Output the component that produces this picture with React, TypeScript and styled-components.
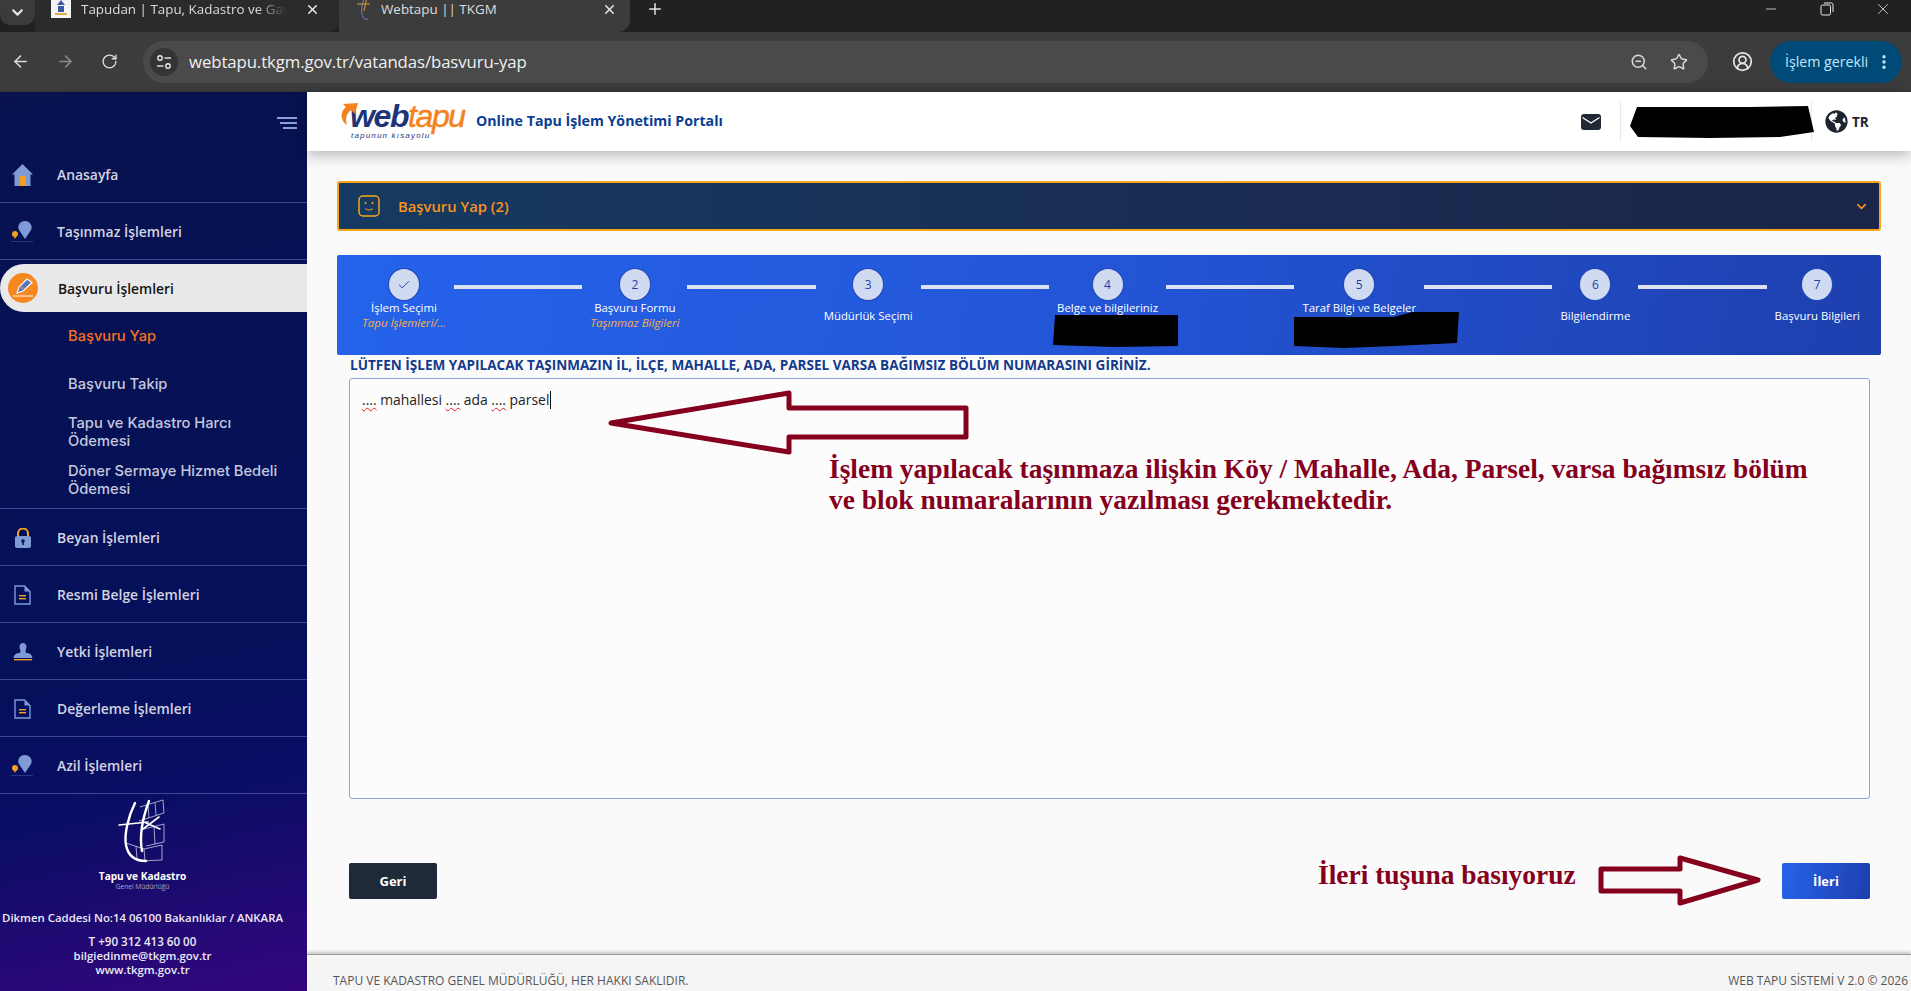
import React from 'react'
import styled, { createGlobalStyle } from 'styled-components'
import {
  ArrowLeft,
  ArrowRight,
  RotateCw,
  X,
  Plus,
  ChevronDown,
  Star,
  ZoomOut,
  CircleUserRound,
  EllipsisVertical,
  Minus,
  Check,
} from 'lucide-react'
import { FaGlobeAmericas } from 'react-icons/fa'

const GlobalStyle = createGlobalStyle`
  html, body {
    margin: 0;
    padding: 0;
    background: #fafafa;
    overflow: hidden;
  }
  * {
    box-sizing: border-box;
  }
`

const Shell = styled.div`
  position: relative;
  width: 1911px;
  height: 991px;
  display: flex;
  flex-direction: column;
  overflow: hidden;
  font-family: 'Open Sans', 'Noto Sans', sans-serif;
`

/* browser chrome */
const TabStrip = styled.div`
  height: 32px;
  flex: none;
  display: flex;
  background: #202222;
  color: #e3e3e3;
`

const TabMenu = styled.div`
  width: 35px;
  height: 25px;
  background: #3a3c3c;
  border-radius: 0 0 10px 10px;
  display: flex;
  align-items: center;
  justify-content: center;
`

const Tab = styled.div<{ $active?: boolean; $width: number }>`
  width: ${({ $width }) => $width}px;
  height: 32px;
  padding: 0 ${({ $active }) => ($active ? 13 : 19)}px 14px 16px;
  display: flex;
  align-items: center;
  gap: 10px;
  font-size: 13.4px;
  background: ${({ $active }) => ($active ? '#3c3c3c' : '#2a2b2b')};
  border-radius: 0 0 12px 0;
`

const TabTitle = styled.span<{ $fade?: boolean }>`
  flex: 1;
  white-space: nowrap;
  overflow: hidden;
  color: #dcdcdc;
  ${({ $fade }) =>
    $fade &&
    `
    margin-right: 8px;
    mask-image: linear-gradient(90deg, #000 85%, transparent 100%);
  `}
`

const NewTab = styled.div`
  width: 50px;
  padding: 0 0 14px 16px;
  display: flex;
  align-items: center;
`

const WindowButtons = styled.div`
  margin-left: auto;
  width: 148px;
  padding-bottom: 14px;
  display: flex;
  align-items: center;
  justify-content: space-between;
  padding-right: 19px;
`

const Toolbar = styled.div`
  height: 60px;
  flex: none;
  display: flex;
  align-items: center;
  padding: 0 9px 0 12px;
  background: #3c3c3c;
  color: #d6d6d6;
  border-bottom: 1px solid #333;
`

const NavButton = styled.div<{ $dim?: boolean }>`
  width: 46px;
  margin-left: -1px;
  display: flex;
  color: ${({ $dim }) => ($dim ? '#8c8c8c' : '#dcdcdc')};
`

const Omnibox = styled.div`
  width: 1565px;
  height: 42px;
  margin-left: -4px;
  padding: 0 20px 0 7px;
  display: flex;
  align-items: center;
  background: #4a4a4a;
  border-radius: 21px;
`

const SiteChip = styled.div`
  width: 28px;
  height: 28px;
  border-radius: 14px;
  background: #333435;
  display: flex;
  align-items: center;
  justify-content: center;
`

const Url = styled.span`
  margin-left: 11px;
  flex: 1;
  font-size: 16.8px;
  letter-spacing: -0.1px;
  color: #f0f0f0;
`

const OmniIcons = styled.div`
  width: 58px;
  display: flex;
  justify-content: space-between;
  color: #d8d8d8;
`

const Profile = styled.div`
  width: 62px;
  padding-left: 6px;
  display: flex;
  justify-content: center;
  color: #e6e6e6;
`

const ActionPill = styled.div`
  width: 132px;
  height: 42px;
  padding: 0 9px 0 15px;
  display: flex;
  align-items: center;
  justify-content: space-between;
  border-radius: 21px;
  background: #004a77;
  color: #c2e7ff;
  font-size: 14.2px;
  white-space: nowrap;
`

/* page frame */
const Body = styled.div`
  flex: 1;
  min-height: 0;
  display: flex;
`

const Sidebar = styled.aside`
  width: 307px;
  flex: none;
  display: flex;
  flex-direction: column;
  background: linear-gradient(168deg, #07124f 0%, #04105a 62%, #0c0d66 78%, #34067f 100%);
`

const SidebarTop = styled.div`
  height: 54px;
  padding: 25px 10px 0 0;
  display: flex;
  justify-content: flex-end;
  color: #8aa0d8;
`

const Row = styled.div`
  height: 57px;
  padding: 1px 0 0 10px;
  display: flex;
  align-items: center;
  border-bottom: 1px solid #3d4690;
  font-size: 13.9px;
  font-weight: 600;
  color: #d3d3e2;
`

const RowIcon = styled.span`
  width: 25px;
  height: 24px;
  margin-right: 22px;
  display: flex;
  align-items: center;
  justify-content: center;
`

const ActiveWrap = styled.div`
  padding: 4px 0 0;
`

const ActiveRow = styled.div`
  height: 48px;
  padding-left: 8px;
  display: flex;
  align-items: center;
  background: #e9e9e9;
  border-radius: 24px 0 0 24px;
  color: #141414;
  font-size: 13.8px;
  font-weight: 600;
`

const ActiveIcon = styled.span`
  width: 30px;
  height: 30px;
  margin-right: 20px;
  border-radius: 50%;
  background: #f7871f;
  display: flex;
  align-items: center;
  justify-content: center;
`

const SubMenu = styled.div`
  padding-bottom: 4px;
  border-bottom: 1px solid #3d4690;
`

const SubItem = styled.div<{ $active?: boolean }>`
  height: 48px;
  padding-left: 68px;
  padding-right: 10px;
  display: flex;
  align-items: center;
  font-family: Inter, 'Noto Sans', sans-serif;
  font-size: 14.7px;
  font-weight: 500;
  line-height: 18px;
  color: ${({ $active }) => ($active ? '#f4701f' : '#c6c8dc')};
`

const SidebarFoot = styled.div`
  padding: 5px 22px 0 0;
  display: flex;
  flex-direction: column;
  align-items: center;
  color: #eceaf6;
  font-weight: 600;
  line-height: 15px;
  white-space: nowrap;
`

const BrandName = styled.div`
  margin-top: 7px;
  font-size: 10.1px;
  font-weight: 700;
  line-height: 13px;
  color: #fff;
`

const BrandSub = styled.div`
  font-size: 6.6px;
  font-weight: 400;
  line-height: 8px;
  color: #a8a8c4;
`

const Address = styled.div`
  margin: 19px 0 10px;
  font-size: 11.4px;
`

const Contact = styled.div<{ $big?: boolean }>`
  font-size: ${({ $big }) => ($big ? 11.6 : 11.4)}px;
  line-height: 14px;
`

const Main = styled.main`
  flex: 1;
  min-width: 0;
  display: flex;
  flex-direction: column;
  background: #fafafa;
`

const Header = styled.header`
  position: relative;
  z-index: 2;
  height: 59px;
  flex: none;
  padding-left: 33px;
  display: flex;
  align-items: center;
  background: #fff;
  box-shadow: 0 4px 14px rgba(0, 0, 0, 0.28);
`

const Logo = styled.div`
  position: relative;
  width: 123px;
  height: 38px;
  padding-left: 10px;
  margin-top: -3px;
  flex: none;
`

const Swoosh = styled.svg`
  position: absolute;
  left: 0;
  top: 0;
`

const LogoWord = styled.div`
  font-family: 'Liberation Sans', sans-serif;
  font-style: italic;
  font-weight: 700;
  font-size: 32px;
  line-height: 31px;
  letter-spacing: -1.4px;
  color: #1d3478;
`

const LogoTapu = styled.span`
  color: #f58220;
  font-weight: 400;
  -webkit-text-stroke: 0.5px #f58220;
`

const LogoTag = styled.div`
  padding-left: 1px;
  font-family: 'Liberation Sans', sans-serif;
  font-style: italic;
  font-size: 8px;
  line-height: 8px;
  letter-spacing: 1.18px;
  color: #1d3478;
`

const PortalTitle = styled.div`
  margin: -2px 0 0 13px;
  font-size: 14.2px;
  font-weight: 700;
  color: #0b3d91;
  white-space: nowrap;
`

const HeaderRight = styled.div`
  margin-left: auto;
  height: 40px;
  display: flex;
  align-items: center;
  color: #1c2430;
`

const MailSlot = styled.div`
  width: 39px;
  padding-right: 19px;
  display: flex;
  justify-content: flex-end;
`

const UserBox = styled.div`
  width: 192px;
  height: 40px;
  padding-left: 9px;
  border-left: 1px solid #e8e8e8;
  border-right: 1px solid #e8e8e8;
  display: flex;
  align-items: center;
`

const Redaction = styled.svg`
  display: block;
  flex: none;
`

const Lang = styled.div`
  width: 99px;
  padding-left: 13px;
  display: flex;
  align-items: center;
  gap: 4px;
  font-size: 13.5px;
  font-weight: 700;
`

const Content = styled.div`
  flex: 1;
  min-height: 0;
  padding: 30px 30px 0;
  display: flex;
  flex-direction: column;
`

const Accordion = styled.div`
  height: 50px;
  flex: none;
  padding: 0 10px 0 19px;
  display: flex;
  align-items: center;
  border: 2px solid #f9a51a;
  border-radius: 3px;
  background: linear-gradient(90deg, #163a60 0%, #1a2c52 60%, #1b2549 100%);
  color: #f7931e;
  font-size: 14.8px;
  font-weight: 600;
`

const AccordionTitle = styled.span`
  margin-left: 18px;
  flex: 1;
`

const StepBand = styled.div`
  height: 100px;
  margin-top: 24px;
  flex: none;
  padding: 13px 21px 0 25px;
  display: flex;
  align-items: flex-start;
  border-radius: 2px;
  background: linear-gradient(100deg, #2563eb 0%, #2355d6 50%, #1e3fae 100%);
  color: #fff;
`

const Step = styled.div`
  position: relative;
  display: flex;
  flex-direction: column;
  align-items: center;
`

const StepCircle = styled.div`
  width: 32px;
  height: 33px;
  border-radius: 50%;
  border: 1px solid #1b44b8;
  background: #d0daf0;
  color: #1d3fa8;
  font-size: 12px;
  display: flex;
  align-items: center;
  justify-content: center;
`

const StepText = styled.div`
  height: 30px;
  margin-top: -1px;
  display: flex;
  flex-direction: column;
  align-items: center;
  justify-content: center;
  white-space: nowrap;
  font-size: 11.4px;
  line-height: 15px;
`

const StepSub = styled.div`
  font-size: 11.5px;
  font-style: italic;
  color: #f7b043;
`

const StepRedact = styled.svg<{ $left: number; $top: number }>`
  position: absolute;
  left: ${({ $left }) => $left}px;
  top: ${({ $top }) => $top}px;
`

const Connector = styled.div`
  flex: 1;
  height: 4px;
  margin: 17px 8px 0;
  background: #dbe2f2;
`

const FormLabel = styled.div`
  height: 23px;
  padding: 0 0 3px 13px;
  display: flex;
  align-items: center;
  font-size: 13.55px;
  font-weight: 700;
  color: #143a8c;
  white-space: nowrap;
`

const Form = styled.div`
  padding: 0 11px 0 12px;
  flex: 1;
  display: flex;
  flex-direction: column;
`

const TextBox = styled.div`
  height: 421px;
  padding: 11px 12px;
  border: 1px solid #8ea4d8;
  border-radius: 3px;
  background: #fcfcfc;
  font-size: 13.9px;
  line-height: 20px;
  color: #222;
`

const Misspelt = styled.span`
  text-decoration: underline wavy #e02020 1px;
  text-underline-offset: 2px;
`

const Caret = styled.span`
  display: inline-block;
  width: 1px;
  height: 18px;
  margin-left: 1px;
  vertical-align: -4px;
  background: #111;
`

const ButtonRow = styled.div`
  margin-top: 64px;
  display: flex;
  justify-content: space-between;
`

const FormButton = styled.div<{ $primary?: boolean }>`
  width: 88px;
  height: 36px;
  display: flex;
  align-items: center;
  justify-content: center;
  border-radius: 2px;
  font-size: 13px;
  font-weight: 700;
  color: #fff;
  background: ${({ $primary }) =>
    $primary ? 'linear-gradient(100deg, #2563eb, #1e3fae)' : '#1e2a38'};
`

const Footer = styled.footer`
  height: 37px;
  flex: none;
  padding: 14px 3px 0 26px;
  display: flex;
  align-items: center;
  justify-content: space-between;
  border-top: 1px solid #9a9a9a;
  background: #f5f5f5;
  box-shadow: 0 -2px 3px rgba(0, 0, 0, 0.22);
  color: #555;
  font-size: 12px;
`

/* red notes laid over the screenshot */
const NoteLayer = styled.svg`
  position: absolute;
  left: 0;
  top: 0;
  z-index: 3;
  pointer-events: none;
`

const Note = styled.div<{ $left: number; $top: number }>`
  position: absolute;
  z-index: 3;
  left: ${({ $left }) => $left}px;
  top: ${({ $top }) => $top}px;
  font-family: 'Liberation Serif', serif;
  font-weight: 700;
  font-size: 27.45px;
  line-height: 31px;
  color: #85001c;
  white-space: nowrap;
`

const HouseIcon = () => (
  <svg width="23" height="24" viewBox="0 0 23 24">
    <path d="M11.5 1 L22 11.5 H19.5 V23 H3.5 V11.5 H1 Z" fill="#7f9ad6" />
    <rect x="9" y="13" width="5.5" height="10" fill="#f5a01f" />
  </svg>
)

const PinIcon = () => (
  <svg width="24" height="22" viewBox="0 0 24 22">
    <path d="M14 0 C8 0 6 6 8 9 L14 18 L20 9 C22 5 19 0 14 0 Z" fill="#7f9ad6" />
    <circle cx="4" cy="13" r="3" fill="#f5a01f" />
    <path d="M4 18 L2 14 H6 Z" fill="#f5a01f" />
    <rect x="0" y="20" width="22" height="1" fill="#2a3580" />
  </svg>
)

const LockIcon = () => (
  <svg width="18" height="20" viewBox="0 0 18 20">
    <path d="M4 9 V5.5 A5 5 0 0 1 14 5.5 V9" fill="none" stroke="#f5a01f" strokeWidth="2" />
    <rect x="1" y="8" width="16" height="12" rx="2" fill="#7f9ad6" />
    <circle cx="9" cy="13" r="1.8" fill="#0a1450" />
    <rect x="8.2" y="13" width="1.6" height="4" fill="#0a1450" />
  </svg>
)

const DocIcon = () => (
  <svg width="17" height="20" viewBox="0 0 17 20">
    <path d="M1 1 H10.5 L16 6.5 V19 H1 Z" fill="none" stroke="#7f9ad6" strokeWidth="1.4" />
    <path d="M10.5 1 V6.5 H16 Z" fill="#7f9ad6" />
    <rect x="5" y="10" width="7" height="1.4" fill="#f5a01f" />
    <rect x="5" y="13" width="7" height="1.4" fill="#f5a01f" />
  </svg>
)

const StampIcon = () => (
  <svg width="20" height="20" viewBox="0 0 20 20">
    <path d="M7 7 C6 5 6.5 1 10 1 C13.5 1 14 5 13 7 C12.5 9 12.5 10 13 11 C16 11 19 12 19.5 16 H0.5 C1 12 4 11 7 11 C7.5 10 7.5 9 7 7 Z" fill="#7f9ad6" />
    <rect x="1" y="17" width="18" height="1.4" fill="#f5a01f" />
  </svg>
)

const PenIcon = () => (
  <svg width="22" height="20" viewBox="0 0 22 20">
    <path d="M15 1 L20 4.5 L11 13 L5 15 L7 9 Z" fill="#4f74c8" stroke="#fff" strokeWidth="1.2" />
    <circle cx="10" cy="10" r="1.3" fill="#f7871f" />
    <rect x="1" y="17.5" width="20" height="1" fill="#fff" />
  </svg>
)

const MailIcon = () => (
  <svg width="20" height="16" viewBox="0 0 20 16">
    <rect width="20" height="16" rx="3" fill="#1f2833" />
    <path d="M1.5 3.5 L10 9 L18.5 3.5" fill="none" stroke="#fff" strokeWidth="1.4" />
  </svg>
)

const SmileIcon = () => (
  <svg width="22" height="22" viewBox="0 0 22 22" fill="none" stroke="#f9a51a">
    <rect x="1" y="1" width="20" height="20" rx="4" strokeWidth="1.5" />
    <circle cx="7.5" cy="8" r="0.7" fill="#f9a51a" />
    <circle cx="14.5" cy="8" r="0.7" fill="#f9a51a" />
    <path d="M7.5 13.5 C9 15.5 13 15.5 14.5 13.5" strokeWidth="1.2" />
  </svg>
)

const SiteInfoIcon = () => (
  <svg width="16" height="16" viewBox="0 0 16 16" fill="none" stroke="#e8e8e8" strokeWidth="1.4">
    <circle cx="4" cy="4" r="2.2" />
    <path d="M8.5 4 H15" />
    <circle cx="12" cy="12" r="2.2" />
    <path d="M1 12 H7.5" />
  </svg>
)

const Favicon = () => (
  <svg width="20" height="18" viewBox="0 0 20 18">
    <rect width="20" height="18" fill="#f4f4f4" />
    <path d="M10 0 L14 5 H6 Z M7 6 H13 V12 H7 Z" fill="#3a5aa8" />
    <rect x="4" y="13" width="12" height="2" fill="#d9b24a" />
  </svg>
)

const TkgmFavicon = () => (
  <svg width="16" height="24" viewBox="0 0 16 24" fill="none">
    <path d="M10 0 C7 6 6 12 7 18 C7.5 21 10 23 13 22" stroke="#5b6f9e" strokeWidth="1.4" />
    <path d="M2 7 H15" stroke="#c98a2c" strokeWidth="1.2" />
    <path d="M12 0 L9 14" stroke="#c98a2c" strokeWidth="1.2" />
  </svg>
)

const HamburgerIcon = () => (
  <svg width="20" height="12" viewBox="0 0 20 12" fill="#8aa0d8">
    <rect width="20" height="2" />
    <rect x="3" y="5" width="17" height="2" />
    <rect x="6" y="10" width="14" height="2" />
  </svg>
)

const TkgmLogo = () => (
  <svg width="50" height="64" viewBox="0 0 50 64" fill="none">
    <g stroke="#c9cce0" strokeWidth="0.8">
      <path d="M22 8 L45 1 L46 14 L21 22" />
      <path d="M30 6 L31 19 M37 3.5 L38 16" />
      <path d="M26 30 L46 25 L46 43 L28 47" />
      <path d="M36 28 L37 45" />
      <path d="M8 44 L26 50 L44 46 L44 61 L22 62 L10 54" />
      <path d="M26 50 L27 62 M18 47 L19 60" />
    </g>
    <g stroke="#fff" strokeLinecap="round">
      <path d="M17 4 C10 18 6 36 8 46 C10 57 17 62 28 62" strokeWidth="2.4" />
      <path d="M1 26 L30 23" strokeWidth="1.6" />
      <path d="M31 2 C25 18 21 36 24 52" strokeWidth="2.4" />
      <path d="M25 30 L41 18 M28 24 L42 30" strokeWidth="1.6" />
    </g>
  </svg>
)

const steps = [
  { label: 'İşlem Seçimi', sub: 'Tapu İşlemleri/...', done: true },
  { label: 'Başvuru Formu', sub: 'Taşınmaz Bilgileri' },
  { label: 'Müdürlük Seçimi' },
  {
    label: 'Belge ve bilgileriniz',
    redact: { width: 125, height: 32, left: -4, top: 47, d: 'M2 0 H125 V31 L60 32 L0 30 Z' },
  },
  {
    label: 'Taraf Bilgi ve Belgeler',
    redact: { width: 165, height: 36, left: -8, top: 44, d: 'M0 5 H100 L118 0 H165 L163 31 L100 34 L50 36 L0 34 Z' },
  },
  { label: 'Bilgilendirme' },
  { label: 'Başvuru Bilgileri' },
]

const rowsAfter = [
  { label: 'Beyan İşlemleri', icon: <LockIcon /> },
  { label: 'Resmi Belge İşlemleri', icon: <DocIcon /> },
  { label: 'Yetki İşlemleri', icon: <StampIcon /> },
  { label: 'Değerleme İşlemleri', icon: <DocIcon /> },
  { label: 'Azil İşlemleri', icon: <PinIcon /> },
]

const App: React.FC = () => {
  return (
    <Shell>
      <GlobalStyle />
      <TabStrip>
        <TabMenu>
          <ChevronDown size={17} strokeWidth={3} />
        </TabMenu>
        <Tab $width={304}>
          <Favicon />
          <TabTitle $fade>Tapudan | Tapu, Kadastro ve Gayrimenkul</TabTitle>
          <X size={15} strokeWidth={2.5} />
        </Tab>
        <Tab $active $width={291}>
          <TkgmFavicon />
          <TabTitle>Webtapu || TKGM</TabTitle>
          <X size={15} strokeWidth={2.5} />
        </Tab>
        <NewTab>
          <Plus size={18} strokeWidth={2} />
        </NewTab>
        <WindowButtons>
          <Minus size={16} strokeWidth={1.2} />
          <svg width="14" height="14" viewBox="0 0 14 14" fill="none" stroke="#e6e6e6">
            <rect x="1" y="3" width="9.5" height="10" rx="1.5" />
            <path d="M4 1 H11.5 A1.5 1.5 0 0 1 13 2.5 V10" />
          </svg>
          <X size={18} strokeWidth={1.1} />
        </WindowButtons>
      </TabStrip>
      <Toolbar>
        <NavButton>
          <ArrowLeft size={19} />
        </NavButton>
        <NavButton $dim>
          <ArrowRight size={19} />
        </NavButton>
        <NavButton>
          <RotateCw size={17} />
        </NavButton>
        <Omnibox>
          <SiteChip>
            <SiteInfoIcon />
          </SiteChip>
          <Url>webtapu.tkgm.gov.tr/vatandas/basvuru-yap</Url>
          <OmniIcons>
            <ZoomOut size={18} />
            <Star size={18} />
          </OmniIcons>
        </Omnibox>
        <Profile>
          <CircleUserRound size={21} />
        </Profile>
        <ActionPill>
          İşlem gerekli
          <EllipsisVertical size={18} strokeWidth={2.6} />
        </ActionPill>
      </Toolbar>
      <Body>
        <Sidebar>
          <SidebarTop>
            <HamburgerIcon />
          </SidebarTop>
          <Row>
            <RowIcon>
              <HouseIcon />
            </RowIcon>
            Anasayfa
          </Row>
          <Row>
            <RowIcon>
              <PinIcon />
            </RowIcon>
            Taşınmaz İşlemleri
          </Row>
          <ActiveWrap>
            <ActiveRow>
              <ActiveIcon>
                <PenIcon />
              </ActiveIcon>
              Başvuru İşlemleri
            </ActiveRow>
          </ActiveWrap>
          <SubMenu>
            <SubItem $active>Başvuru Yap</SubItem>
            <SubItem>Başvuru Takip</SubItem>
            <SubItem>
              Tapu ve Kadastro Harcı
              <br />
              Ödemesi
            </SubItem>
            <SubItem>
              Döner Sermaye Hizmet Bedeli
              <br />
              Ödemesi
            </SubItem>
          </SubMenu>
          {rowsAfter.map((row) => (
            <Row key={row.label}>
              <RowIcon>{row.icon}</RowIcon>
              {row.label}
            </Row>
          ))}
          <SidebarFoot>
            <TkgmLogo />
            <BrandName>Tapu ve Kadastro</BrandName>
            <BrandSub>Genel Müdürlüğü</BrandSub>
            <Address>Dikmen Caddesi No:14 06100 Bakanlıklar / ANKARA</Address>
            <Contact $big>T +90 312 413 60 00</Contact>
            <Contact>bilgiedinme@tkgm.gov.tr</Contact>
            <Contact>www.tkgm.gov.tr</Contact>
          </SidebarFoot>
        </Sidebar>
        <Main>
          <Header>
            <Logo>
              <Swoosh width="20" height="25" viewBox="0 0 20 25">
                <path d="M7 24 C1 20 -1 12 6 6 L3 3 L18 2 L15 13 L11 9 C6 13 5 18 7 24 Z" fill="#f58220" />
              </Swoosh>
              <LogoWord>
                web<LogoTapu>tapu</LogoTapu>
              </LogoWord>
              <LogoTag>tapunun kısayolu</LogoTag>
            </Logo>
            <PortalTitle>Online Tapu İşlem Yönetimi Portalı</PortalTitle>
            <HeaderRight>
              <MailSlot>
                <MailIcon />
              </MailSlot>
              <UserBox>
                <Redaction width="185" height="32" viewBox="0 0 185 32">
                  <path d="M7 1 H120 L178 0 L184 26 L150 31 L80 32 L8 31 L0 20 Z" fill="#000" />
                </Redaction>
              </UserBox>
              <Lang>
                <FaGlobeAmericas size={23} />
                TR
              </Lang>
            </HeaderRight>
          </Header>
          <Content>
            <Accordion>
              <SmileIcon />
              <AccordionTitle>Başvuru Yap (2)</AccordionTitle>
              <ChevronDown size={15} strokeWidth={2.5} />
            </Accordion>
            <StepBand>
              {steps.map((step, i) => (
                <React.Fragment key={step.label}>
                  {i > 0 && <Connector />}
                  <Step>
                    <StepCircle>{step.done ? <Check size={14} strokeWidth={1.6} /> : i + 1}</StepCircle>
                    <StepText>
                      {step.label}
                      {(step.sub || step.redact) && <StepSub>{step.sub ?? '\u00a0'}</StepSub>}
                    </StepText>
                    {step.redact && (
                      <StepRedact
                        $left={step.redact.left}
                        $top={step.redact.top}
                        width={step.redact.width}
                        height={step.redact.height}
                        viewBox={`0 0 ${step.redact.width} ${step.redact.height}`}
                      >
                        <path d={step.redact.d} fill="#000" />
                      </StepRedact>
                    )}
                  </Step>
                </React.Fragment>
              ))}
            </StepBand>
            <FormLabel>
              LÜTFEN İŞLEM YAPILACAK TAŞINMAZIN İL, İLÇE, MAHALLE, ADA, PARSEL VARSA BAĞIMSIZ BÖLÜM NUMARASINI GİRİNİZ.
            </FormLabel>
            <Form>
              <TextBox>
                <Misspelt>....</Misspelt> mahallesi <Misspelt>....</Misspelt> ada <Misspelt>....</Misspelt> parsel
                <Caret />
              </TextBox>
              <ButtonRow>
                <FormButton>Geri</FormButton>
                <FormButton $primary>İleri</FormButton>
              </ButtonRow>
            </Form>
          </Content>
          <Footer>
            <span>TAPU VE KADASTRO GENEL MÜDÜRLÜĞÜ, HER HAKKI SAKLIDIR.</span>
            <span>WEB TAPU SİSTEMİ V 2.0 © 2026</span>
          </Footer>
        </Main>
      </Body>
      <NoteLayer width="1911" height="991" viewBox="0 0 1911 991" fill="none" stroke="#85001c" strokeWidth="5" strokeLinejoin="round">
        <path d="M611 423 L789 393 V408 H966 V437 H789 V452 Z" />
        <path d="M1601 869 H1680 V858 L1758 880 L1680 903 V891 H1601 Z" />
      </NoteLayer>
      <Note $left={829} $top={454}>
        İşlem yapılacak taşınmaza ilişkin Köy / Mahalle, Ada, Parsel, varsa bağımsız bölüm
        <br />
        ve blok numaralarının yazılması gerekmektedir.
      </Note>
      <Note $left={1318} $top={860}>
        İleri tuşuna basıyoruz
      </Note>
    </Shell>
  )
}

export default App
